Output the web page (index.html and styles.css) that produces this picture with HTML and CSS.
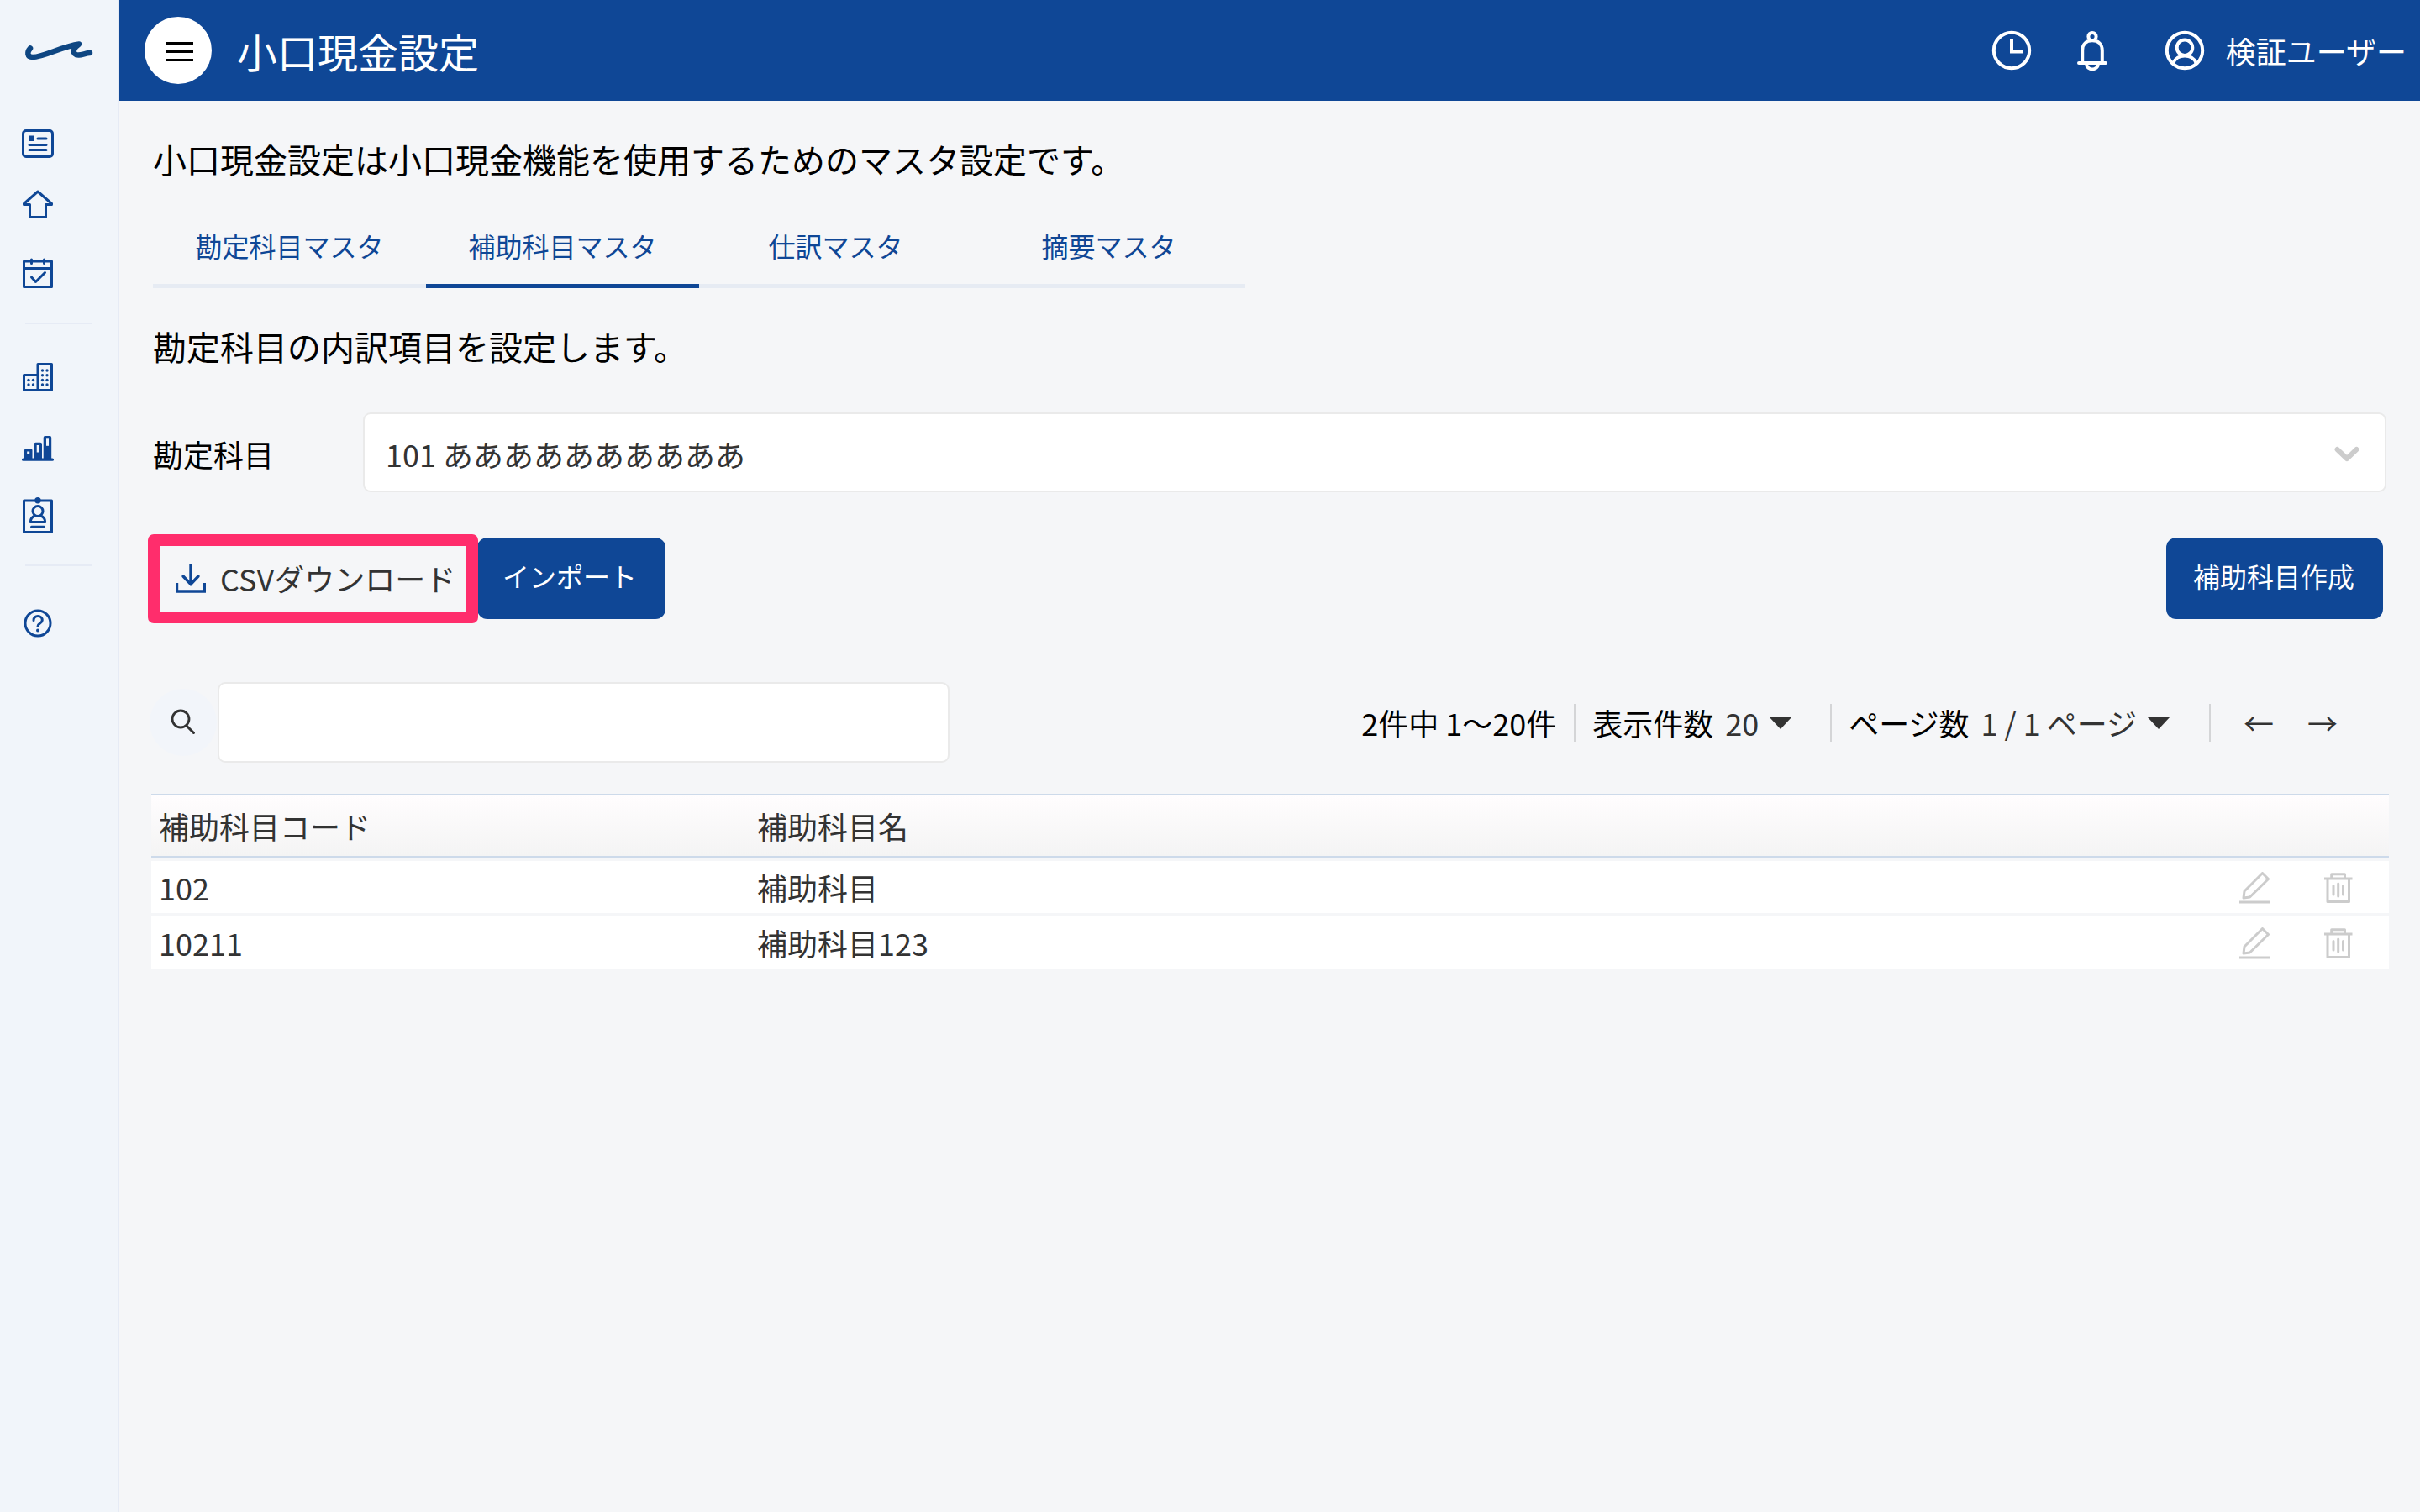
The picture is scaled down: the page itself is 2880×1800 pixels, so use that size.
FILE: index.html
```html
<!DOCTYPE html>
<html lang="ja">
<head>
<meta charset="UTF-8">
<meta name="viewport" content="width=device-width, initial-scale=1.0">
<title>小口現金設定</title>
<link rel="stylesheet" href="styles.css">
</head>
<body>

<nav class="sidebar">
    <svg class="logo" width="84" height="28" viewBox="0 0 84 28" fill="none" stroke="#0e4682" stroke-width="6.5" stroke-linecap="round" stroke-linejoin="round">
        <path d="M8 11.500C4 16 4 22 11 22C24 22 46 9 66 6.500C61 10 58 15 61 18C65 22 73 17 79 17"/>
    </svg>

    <svg class="side-icon news" width="38" height="34" viewBox="0 0 38 34">
        <rect x="1.500" y="1.500" width="35" height="31" rx="3.500"/>
        <rect class="fill" x="8" y="7.500" width="7" height="6.500" rx="1"/>
        <path d="M19 11h10M9 18.500h20M9 24.500h20"/>
    </svg>
    <svg class="side-icon home" width="38" height="36" viewBox="0 0 38 36">
        <path d="M19 3L2.500 17.500V18.500H9.500V33.500H28.500V18.500H35.500V17.500Z"/>
    </svg>
    <svg class="side-icon calendar" width="38" height="38" viewBox="0 0 38 38">
        <path d="M2.500 5h33v30.500h-33zM2.500 13.500h33M11.500 3v4.500M26.500 3v4.500"/>
        <path d="M11.500 24l5 5.500L27.500 18.500"/>
    </svg>

    <hr class="divider">

    <svg class="side-icon building" width="38" height="36" viewBox="0 0 38 36">
        <path d="M2.500 15.500H19V33.500H2.500zM19 2.500h16.500v31H19z"/>
        <g class="fill">
            <circle cx="8" cy="21.500" r="1.700"/><circle cx="13.500" cy="21.500" r="1.700"/>
            <circle cx="8" cy="27" r="1.700"/><circle cx="13.500" cy="27" r="1.700"/>
            <circle cx="24.500" cy="10" r="1.700"/><circle cx="30" cy="10" r="1.700"/>
            <circle cx="24.500" cy="15.700" r="1.700"/><circle cx="30" cy="15.700" r="1.700"/>
            <circle cx="24.500" cy="21.500" r="1.700"/><circle cx="30" cy="21.500" r="1.700"/>
            <circle cx="24.500" cy="27" r="1.700"/><circle cx="30" cy="27" r="1.700"/>
        </g>
    </svg>
    <svg class="side-icon chart" width="38" height="30" viewBox="0 0 38 30">
        <g class="fill">
            <rect x="3" y="15" width="9.500" height="14" rx="2"/>
            <rect x="14.500" y="7.700" width="9.500" height="21" rx="2"/>
            <rect x="25.700" y="0" width="9.500" height="29" rx="2"/>
            <rect x="0" y="26.500" width="38" height="3.300" rx="1.600"/>
        </g>
        <g class="hole">
            <rect x="6.200" y="18.500" width="3" height="3.500"/>
            <rect x="17.700" y="11" width="3" height="8.500"/>
            <rect x="29" y="3.300" width="3" height="8.500"/>
        </g>
    </svg>
    <svg class="side-icon badge" width="38" height="44" viewBox="0 0 38 44">
        <path d="M2.500 4h33v37.500h-33z"/>
        <circle class="fill" cx="19" cy="3.800" r="3.700"/>
        <circle cx="19" cy="16.500" r="6"/>
        <path d="M15.500 22C11.500 23.500 10.300 27 10.300 29.500H27.700C27.700 27 26.500 23.500 22.500 22M11.500 35.300h15"/>
    </svg>

    <hr class="divider">

    <svg class="side-icon help" width="38" height="38" viewBox="0 0 38 38">
        <circle cx="19" cy="19" r="15"/>
        <path d="M14 15.500C14 12 16.500 10.500 19 10.500C22 10.500 24.300 12.500 24.300 15.300C24.300 19 19 19 19 22.500"/>
        <circle class="fill" cx="19" cy="27.500" r="2"/>
    </svg>
</nav>

<div class="page">
    <header class="header">
        <button class="menu-button">
            <span class="bar"></span>
            <span class="bar"></span>
            <span class="bar"></span>
        </button>
        <h1 class="title">小口現金設定</h1>
        <svg class="head-icon clock" width="48" height="50" viewBox="0 0 48 50">
            <circle cx="24" cy="25" r="21.200"/>
            <path d="M24 11v15.500h13.500" stroke-linecap="butt"/>
        </svg>
        <svg class="head-icon bell" width="48" height="50" viewBox="0 0 48 50">
            <circle cx="24" cy="8.500" r="4.600"/>
            <path d="M12.200 40V25C12.200 17.500 17 13.300 24 13.300S35.800 17.500 35.800 25V40M8 40h32"/>
            <path d="M17.200 41.500C17.200 45 20.500 47.500 24 47.500S30.800 45 30.800 41.500"/>
        </svg>
        <svg class="head-icon user" width="48" height="50" viewBox="0 0 48 50">
            <circle cx="24" cy="25" r="21.200"/>
            <circle cx="24" cy="21.700" r="9.300"/>
            <path d="M10.500 40C12.500 34.500 18 31.500 24 31.500S35.500 34.500 37.500 40"/>
        </svg>
        <span class="user-name">検証ユーザー</span>
    </header>

    <main class="content">
        <p class="lead">小口現金設定は小口現金機能を使用するためのマスタ設定です。</p>

        <div class="tabs">
            <a class="tab">勘定科目マスタ</a>
            <a class="tab active">補助科目マスタ</a>
            <a class="tab">仕訳マスタ</a>
            <a class="tab">摘要マスタ</a>
        </div>

        <p class="lead tab-lead">勘定科目の内訳項目を設定します。</p>

        <div class="field">
            <span class="field-label">勘定科目</span>
            <div class="select">
                <span>101 ああああああああああ</span>
                <svg width="32" height="20" viewBox="0 0 32 20" fill="none" stroke="#cccccc" stroke-width="6" stroke-linecap="round" stroke-linejoin="round">
                    <path d="M4.500 5L16 16L27.500 5"/>
                </svg>
            </div>
        </div>

        <div class="actions">
            <a class="csv-download">
                <svg width="36" height="36" viewBox="0 0 36 36" fill="none" stroke="#0f4796" stroke-width="3.400">
                    <path d="M18 0v24M1.500 23v10h33v-10"/>
                    <path d="M9 15l9 9.500l9-9.500" stroke-linecap="round"/>
                </svg>
                <span>CSVダウンロード</span>
            </a>
            <button class="button import">インポート</button>
            <button class="button create">補助科目作成</button>
        </div>

        <div class="toolbar">
            <button class="search-button">
                <svg width="30" height="32" viewBox="0 0 30 32" fill="none" stroke="#333333" stroke-linecap="round">
                    <circle cx="12" cy="12" r="10" stroke-width="2.800"/>
                    <path d="M19 20l8.500 8.500" stroke-width="3"/>
                </svg>
            </button>
            <input class="search-input" type="text">
            <div class="pager">
                <span class="pager-item total">2件中 1〜20件</span>
                <span class="pager-item per-page">表示件数<span class="value">20</span><i class="caret"></i></span>
                <span class="pager-item page-no">ページ数<span class="value">1 / 1 ページ</span><i class="caret"></i></span>
                <span class="arrow">←</span>
                <span class="arrow">→</span>
            </div>
        </div>

        <div class="list">
            <div class="list-head">
                <span class="code">補助科目コード</span>
                <span class="name">補助科目名</span>
            </div>
            <div class="list-row">
                <span class="code">102</span>
                <span class="name">補助科目</span>
                <svg class="row-icon edit" width="36" height="38" viewBox="0 0 36 38">
                    <path d="M27.500 1.500L34.500 8.500L12.500 30L5 31L6 23Z"/>
                    <path d="M0 36h36"/>
                </svg>
                <svg class="row-icon trash" width="34" height="38" viewBox="0 0 34 38">
                    <path d="M4 8.500V35.500H29.500V8.500M0 8h33.500M8.700 7V2.800H24.500V7"/>
                    <path d="M11 16.500V27M16.700 14V29M22.500 16.500V27" stroke-linecap="round"/>
                </svg>
            </div>
            <div class="list-row">
                <span class="code">10211</span>
                <span class="name">補助科目123</span>
                <svg class="row-icon edit" width="36" height="38" viewBox="0 0 36 38">
                    <path d="M27.500 1.500L34.500 8.500L12.500 30L5 31L6 23Z"/>
                    <path d="M0 36h36"/>
                </svg>
                <svg class="row-icon trash" width="34" height="38" viewBox="0 0 34 38">
                    <path d="M4 8.500V35.500H29.500V8.500M0 8h33.500M8.700 7V2.800H24.500V7"/>
                    <path d="M11 16.500V27M16.700 14V29M22.500 16.500V27" stroke-linecap="round"/>
                </svg>
            </div>
        </div>
    </main>
</div>

</body>
</html>
```
FILE: styles.css
```css
* {
    box-sizing: border-box;
}

body {
    display: flex;
    margin: 0;
    height: 100vh;
    font-family: "Noto Sans CJK JP", sans-serif;
    font-size: 36px;
    line-height: 60px;
    color: #000000;
    background-color: #f5f6f8;
    overflow: hidden;
}

button {
    font-family: inherit;
    border: none;
    padding: 0;
}

p, h1 {
    margin: 0;
}

svg {
    flex: none;
    display: block;
}

/* Left icon menu */
.sidebar {
    display: flex;
    flex-direction: column;
    flex: none;
    width: 142px;
    background-color: #f1f5fa;
    border-right: 2px solid #e6ebf5;
}

.logo {
    margin: 46px 0 0 28px;
}

.side-icon {
    margin-left: 26px;
    fill: none;
    stroke: #0f4796;
    stroke-width: 3;
    stroke-linecap: round;
    stroke-linejoin: round;
}

.side-icon .fill {
    fill: #0f4796;
    stroke: none;
}

.side-icon .hole {
    fill: #f1f5fa;
    stroke: none;
}

.news {
    margin-top: 80px;
}

.home {
    margin-top: 37px;
}

.calendar {
    margin-top: 45px;
}

.divider {
    flex: none;
    width: 80px;
    height: 2px;
    margin: 40px 0 0 30px;
    border: none;
    background-color: #e6ebf5;
}

.building {
    margin-top: 45px;
}

.chart {
    margin-top: 52px;
}

.badge {
    margin-top: 43px;
}

.badge + .divider {
    margin-top: 36px;
}

.help {
    margin-top: 49px;
}

/* Header */
.page {
    flex: 1;
    min-width: 0;
}

.header {
    display: flex;
    align-items: center;
    height: 120px;
    padding: 0 16px 0 30px;
    color: #ffffff;
    background-color: #0f4796;
}

.menu-button {
    display: flex;
    flex-direction: column;
    align-items: center;
    justify-content: center;
    gap: 7px;
    width: 80px;
    height: 80px;
    padding-top: 2px;
    padding-left: 2px;
    border-radius: 50%;
    background-color: #ffffff;
}

.bar {
    width: 33px;
    height: 3px;
    background-color: #000000;
}

.title {
    margin-left: 30px;
    margin-right: auto;
    font-size: 48px;
    font-weight: 400;
}

.head-icon {
    fill: none;
    stroke: #ffffff;
    stroke-width: 4;
    stroke-linecap: round;
}

.bell {
    margin-left: 48px;
}

.user {
    margin-left: 62px;
}

.user-name {
    margin-left: 25px;
}

/* Content */
.content {
    padding: 39px 40px 0;
}

.lead {
    font-size: 40px;
}

.tabs {
    display: flex;
    width: 1300px;
    margin-top: 27px;
}

.tab {
    width: 325px;
    height: 97px;
    border-bottom: 5px solid #e6ebf3;
    font-size: 32px;
    line-height: 92px;
    text-align: center;
    color: #0f4796;
}

.tab.active {
    border-bottom-color: #0f4796;
}

.tab-lead {
    margin-top: 39px;
}

.field {
    display: flex;
    align-items: center;
    margin-top: 49px;
}

.field-label {
    width: 250px;
    padding-top: 3px;
}

.select {
    display: flex;
    align-items: center;
    justify-content: space-between;
    flex: 1;
    height: 95px;
    padding: 2px 29px 0 25px;
    border: 2px solid #eaeaea;
    border-radius: 9px;
    color: #333333;
    background-color: #ffffff;
}

.actions {
    display: flex;
    height: 106px;
    margin: 50px 4px 0 -6px;
}

/* Highlighted download link, overlaps the edge of the import button */
.csv-download {
    position: relative;
    z-index: 1;
    display: flex;
    align-items: center;
    width: 393px;
    padding-left: 19px;
    border: 14px solid #ff2d6c;
    border-radius: 7px;
    color: #333333;
}

.csv-download span {
    margin-left: 17px;
    padding-bottom: 2px;
}

.button {
    height: 97px;
    margin-top: 4px;
    padding: 0 2px 8px 0;
    border-radius: 12px;
    font-size: 32px;
    color: #ffffff;
    background-color: #0f4796;
}

.import {
    width: 224px;
    margin-left: -1px;
    padding-right: 4px;
}

.create {
    width: 258px;
    margin-left: auto;
}

/* Search and paging */
.toolbar {
    display: flex;
    align-items: center;
    margin: 70px 0 0 -4px;
}

.search-button {
    display: flex;
    align-items: center;
    justify-content: center;
    width: 80px;
    height: 80px;
    border-radius: 50%;
    background-color: #f2f5fa;
}

.search-input {
    width: 871px;
    height: 96px;
    margin-left: 1px;
    border: 2px solid #eaeaea;
    border-radius: 9px;
    background-color: #ffffff;
}

.pager {
    display: flex;
    align-items: center;
    margin-left: auto;
    margin-right: 58px;
}

.pager-item {
    display: flex;
    align-items: center;
    height: 45px;
    border-right: 2px solid #d4d5d7;
}

.total {
    padding-right: 21px;
}

.per-page {
    padding-left: 20px;
    padding-right: 45px;
}

.page-no {
    padding-left: 20px;
    padding-right: 46px;
    margin-right: 39px;
}

.value {
    margin-left: 14px;
    color: #333333;
}

.caret {
    margin: 0 0 0 12px;
    border: 14px solid transparent;
    border-top: 15px solid #333333;
    border-bottom: none;
}

.arrow {
    width: 36px;
    color: #333333;
}

.arrow + .arrow {
    margin-left: 40px;
}

/* List */
.list {
    margin: 37px -3px 0 -2px;
    color: #333333;
}

.list-head {
    display: flex;
    align-items: center;
    height: 76px;
    padding-left: 9px;
    border-top: 2px solid #cddaea;
    border-bottom: 2px solid #cddaea;
    background: linear-gradient(#fffdfe, #f4f4f4);
}

.list-row {
    display: flex;
    align-items: center;
    height: 62px;
    margin-top: 4px;
    padding-left: 9px;
    padding-right: 43px;
    background-color: #ffffff;
}

.code {
    width: 712px;
}

.name {
    flex: 1;
}

.row-icon {
    margin-top: 2px;
    fill: none;
    stroke: #cccccc;
    stroke-width: 3;
    stroke-linejoin: round;
}

.trash {
    margin-left: 65px;
}
```
